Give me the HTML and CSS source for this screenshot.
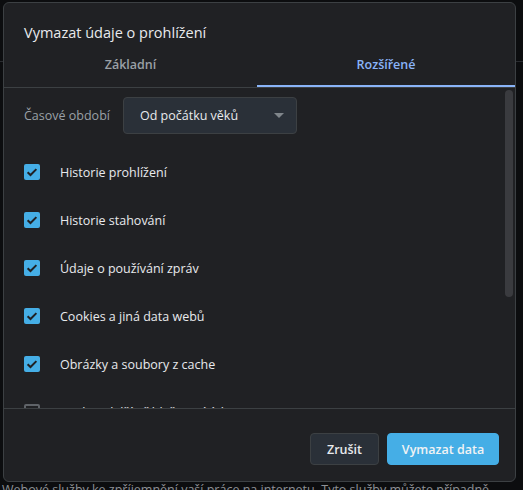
FILE: index.html
```html
<!DOCTYPE html>
<html lang="cs">
<head>
<meta charset="utf-8">
<link rel="stylesheet" href="styles.css">
</head>
<body>
<div class="page">
  <div class="page-rule"></div>
  <p class="page-text">Webové služby ke zpříjemnění vaší práce na internetu. Tyto služby můžete případně</p>
</div>
<div class="dialog">
  <h1 class="title">Vymazat údaje o prohlížení</h1>
  <div class="tabs">
    <div class="tab first">Základní</div>
    <div class="tab active">Rozšířené</div>
  </div>
  <div class="body">
    <div class="period">
      <span class="period-label">Časové období</span>
      <div class="select">
        <span>Od počátku věků</span>
        <span class="arrow"></span>
      </div>
    </div>
    <div class="row"><span class="cb on"><svg viewBox="0 0 16 16"><path d="M3.6 8.2 6.5 11 12.4 5.1" fill="none" stroke="#202124" stroke-width="2"/></svg></span><span class="label">Historie prohlížení</span></div>
    <div class="row"><span class="cb on"><svg viewBox="0 0 16 16"><path d="M3.6 8.2 6.5 11 12.4 5.1" fill="none" stroke="#202124" stroke-width="2"/></svg></span><span class="label">Historie stahování</span></div>
    <div class="row"><span class="cb on"><svg viewBox="0 0 16 16"><path d="M3.6 8.2 6.5 11 12.4 5.1" fill="none" stroke="#202124" stroke-width="2"/></svg></span><span class="label">Údaje o používání zpráv</span></div>
    <div class="row"><span class="cb on"><svg viewBox="0 0 16 16"><path d="M3.6 8.2 6.5 11 12.4 5.1" fill="none" stroke="#202124" stroke-width="2"/></svg></span><span class="label">Cookies a jiná data webů</span></div>
    <div class="row"><span class="cb on"><svg viewBox="0 0 16 16"><path d="M3.6 8.2 6.5 11 12.4 5.1" fill="none" stroke="#202124" stroke-width="2"/></svg></span><span class="label">Obrázky a soubory z cache</span></div>
    <div class="row"><span class="cb"></span><span class="label">Hesla a další přihlašovací údaje</span></div>
    <div class="thumb"></div>
  </div>
  <div class="footer">
    <button class="btn">Zrušit</button>
    <button class="btn primary">Vymazat data</button>
  </div>
</div>
</body>
</html>
```

FILE: styles.css
```css
* { box-sizing: border-box; }
html, body { margin: 0; padding: 0; }
body {
  width: 523px;
  height: 490px;
  overflow: hidden;
  background: #0c0d0f;
  font-family: "Open Sans", "Noto Sans", sans-serif;
  position: relative;
}
.page {
  height: 490px;
  display: flex;
  flex-direction: column;
  justify-content: space-between;
  padding-top: 61px;
}
.page-rule {
  height: 1px;
  background: #2a2c30;
}
.page-text {
  margin: 0 0 -9px 2px;
  font-size: 12.5px;
  line-height: 18px;
  color: #8e9196;
  white-space: nowrap;
}
.dialog {
  position: absolute;
  left: 3px;
  top: 2px;
  width: 513px;
  height: 480px;
  background: #202124;
  border: 1px solid #3c4043;
  border-radius: 6px;
  display: flex;
  flex-direction: column;
  overflow: hidden;
}
.title {
  margin: 0;
  padding: 20px 0 0 20px;
  height: 45px;
  font-size: 14.5px;
  line-height: 20px;
  font-weight: 400;
  color: #e8eaed;
}
.tabs {
  display: flex;
  height: 40px;
  border-bottom: 1px solid #3c4043;
}
.tab {
  flex: 1;
  display: flex;
  align-items: center;
  justify-content: center;
  font-size: 12.5px;
  font-weight: 600;
  color: #9aa0a6;
  padding-bottom: 4px;
  border-bottom: 2px solid transparent;
}
.tab.first {
  flex: none;
  width: 253px;
}
.tab.active {
  color: #8ab4f8;
  border-bottom-color: #8ab4f8;
}
.body {
  flex: 1;
  position: relative;
  overflow: hidden;
  padding: 9px 0 0 20px;
}
.period {
  display: flex;
  align-items: center;
  gap: 13px;
  height: 37px;
  margin-bottom: 14px;
}
.period-label {
  font-size: 12.5px;
  color: #9aa0a6;
}
.select {
  width: 174px;
  height: 37px;
  background: #2a3038;
  border: 1px solid #3c4043;
  border-radius: 4px;
  display: flex;
  align-items: center;
  justify-content: space-between;
  padding: 0 12px 0 16px;
  font-size: 12.5px;
  font-weight: 500;
  color: #e8eaed;
}
.arrow {
  width: 0;
  height: 0;
  border-left: 5px solid transparent;
  border-right: 5px solid transparent;
  border-top: 5px solid #80868b;
}
.row {
  height: 48px;
  display: flex;
  align-items: center;
  gap: 20px;
}
.cb {
  width: 16px;
  height: 16px;
  border-radius: 2px;
  border: 2px solid #5f6368;
  flex: none;
}
.cb.on {
  background: #45aee6;
  border: none;
}
.cb svg { display: block; width: 16px; height: 16px; }
.label {
  font-size: 12.5px;
  color: #e8eaed;
}
.thumb {
  position: absolute;
  right: 2px;
  top: 2px;
  width: 8px;
  height: 207px;
  border-radius: 4px;
  background: #3a3b3f;
}
.footer {
  border-top: 1px solid #3c4043;
  display: flex;
  justify-content: flex-end;
  gap: 8px;
  padding: 24px 16px 0 0;
  height: 73px;
}
.btn {
  height: 32px;
  padding: 0 16px;
  border-radius: 4px;
  border: 1px solid #3c4043;
  background: #2a3038;
  color: #e8eaed;
  font-family: inherit;
  font-size: 12.5px;
  font-weight: 600;
  white-space: nowrap;
}
.btn.primary {
  background: #45aee6;
  border-color: #45aee6;
  color: #f1f3f4;
  width: 112px;
  padding: 0;
}
```
